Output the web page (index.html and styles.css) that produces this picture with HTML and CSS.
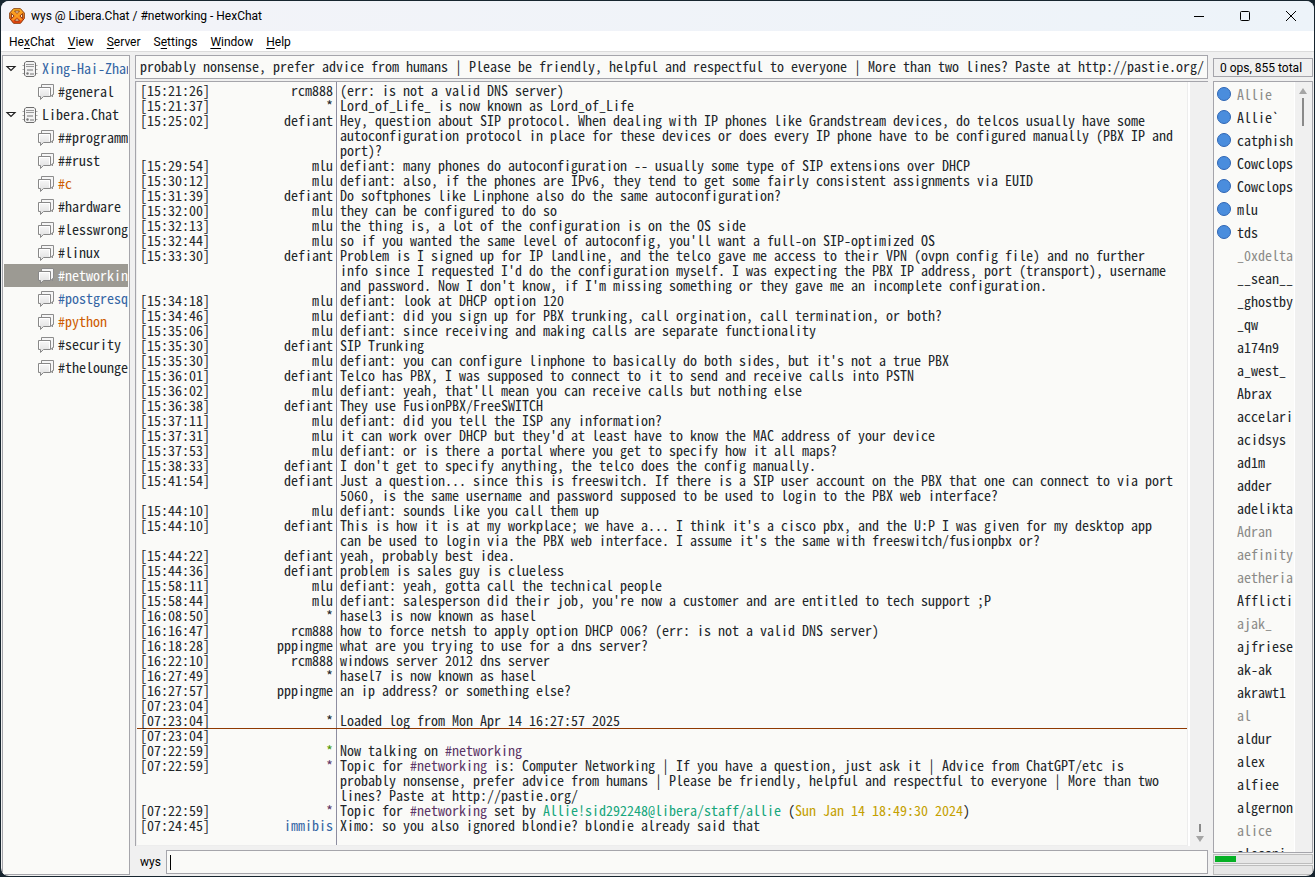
FILE: index.html
```html
<!DOCTYPE html>
<html lang="en">
<head>
    <meta charset="UTF-8">
    <meta name="viewport" content="width=device-width, initial-scale=1.0">
    <title>wys @ Libera.Chat / #networking - HexChat</title>
    <link rel="stylesheet" href="styles.css">
</head>
<body>
    <svg class="defs" aria-hidden="true">
        <linearGradient id="hex" x1="0" y1="0" x2="0" y2="1">
            <stop offset="0" stop-color="#ffc02a"/>
            <stop offset="1" stop-color="#f03c10"/>
        </linearGradient>
        <linearGradient id="paper" x1="0" y1="0" x2="0" y2="1">
            <stop offset="0" stop-color="#f8f8f8"/>
            <stop offset="1" stop-color="#dedede"/>
        </linearGradient>
        <symbol id="server" viewBox="0 0 16 16">
            <path d="M.5 4.500h15M.5 8.500h15M.5 12.500h15" stroke="#a8a8a8"/>
            <path d="M4 .5h8l1.500 1.500v12l-1.500 1.500h-8l-1.500-1.500v-12z" fill="#f2f2f2" stroke="#6d6d6d"/>
            <path d="M4 3.500h8M4 5.500h8" stroke="#999"/>
            <path d="M5 8h6v2h-6zM8 12h4v2h-4z" fill="#b4b4b4"/>
            <circle cx="5.500" cy="12.500" r="1.200" fill="#777"/>
        </symbol>
        <symbol id="channel" viewBox="0 0 16 16">
            <path d="M3.500 .5h12v10h-1v2.500l-2-2.500h-9z" fill="#f6f6f6" stroke="#8c8c8c"/>
            <path d="M.5 3.500h12v9h-7l-3 3v-3h-2z" fill="url(#paper)" stroke="#888"/>
            <path d="M1.500 11.500v-7h10v7" fill="none" stroke="#fff"/>
        </symbol>
        <symbol id="expander" viewBox="0 0 12 8">
            <path d="M2 1.500h8l-4 4z" fill="#fff" stroke="#222" stroke-width="1.200"/>
        </symbol>
    </svg>

    <div class="window">
        <header class="titlebar">
            <svg class="logo" viewBox="0 0 16 16">
                <path d="M4.500 .7h7l3.800 4.300v5.500l-3.800 4.800h-7l-3.800-4.800v-5.500z" fill="url(#hex)" stroke="#8a3a08"/>
                <path d="M5.500 3h5l-2.500 2.500zM5.500 13h5l-2.500-2.500zM2.500 5.500v5l2.500-2.500zM13.500 5.500v5l-2.500-2.500z" fill="#ffe9c4" stroke="#7a2c08" stroke-width=".8"/>
                <path d="M3.500 4l9 8M12.500 4l-9 8" stroke="#f8a020" stroke-width="1.500"/>
            </svg>
            <h1>wys @ Libera.Chat / #networking - HexChat</h1>
            <div class="controls">
                <button type="button" aria-label="Minimize"><svg viewBox="0 0 12 12"><path d="M1 6.500h10"/></svg></button>
                <button type="button" aria-label="Maximize"><svg viewBox="0 0 12 12"><rect x="1.500" y="1.500" width="9" height="9" rx="1"/></svg></button>
                <button type="button" aria-label="Close"><svg viewBox="0 0 12 12"><path d="M1 1l10 10M11 1l-10 10"/></svg></button>
            </div>
        </header>

        <nav class="menubar">
            <button type="button">He<u>x</u>Chat</button>
            <button type="button"><u>V</u>iew</button>
            <button type="button"><u>S</u>erver</button>
            <button type="button">S<u>e</u>ttings</button>
            <button type="button"><u>W</u>indow</button>
            <button type="button"><u>H</u>elp</button>
        </nav>

        <div class="workspace">
            <aside class="tree">
                <ul>
                    <li class="network message"><svg class="arrow"><use href="#expander"/></svg><svg class="icon"><use href="#server"/></svg><span>Xing-Hai-Zhan</span></li>
                    <li><svg class="icon"><use href="#channel"/></svg><span>#general</span></li>
                    <li class="network"><svg class="arrow"><use href="#expander"/></svg><svg class="icon"><use href="#server"/></svg><span>Libera.Chat</span></li>
                    <li><svg class="icon"><use href="#channel"/></svg><span>##programm</span></li>
                    <li><svg class="icon"><use href="#channel"/></svg><span>##rust</span></li>
                    <li class="event"><svg class="icon"><use href="#channel"/></svg><span>#c</span></li>
                    <li><svg class="icon"><use href="#channel"/></svg><span>#hardware</span></li>
                    <li><svg class="icon"><use href="#channel"/></svg><span>#lesswrong</span></li>
                    <li><svg class="icon"><use href="#channel"/></svg><span>#linux</span></li>
                    <li class="selected"><svg class="icon"><use href="#channel"/></svg><span>#networkin</span></li>
                    <li class="message"><svg class="icon"><use href="#channel"/></svg><span>#postgresq</span></li>
                    <li class="event"><svg class="icon"><use href="#channel"/></svg><span>#python</span></li>
                    <li><svg class="icon"><use href="#channel"/></svg><span>#security</span></li>
                    <li><svg class="icon"><use href="#channel"/></svg><span>#thelounge</span></li>
                </ul>
            </aside>

            <main class="chat">
                <input class="topic" type="text" aria-label="Topic" value="probably nonsense, prefer advice from humans | Please be friendly, helpful and respectful to everyone | More than two lines? Paste at http://pastie.org/">

                <div class="log-area">
                    <ol class="log">
                        <li><time>[15:21:26]</time><b>rcm888</b><p>(err: is not a valid DNS server)</p></li>
                        <li><time>[15:21:37]</time><b>*</b><p>Lord_of_Life_ is now known as Lord_of_Life</p></li>
                        <li><time>[15:25:02]</time><b>defiant</b><p>Hey, question about SIP protocol. When dealing with IP phones like Grandstream devices, do telcos usually have some autoconfiguration protocol in place for these devices or does every IP phone have to be configured manually (PBX IP and port)?</p></li>
                        <li><time>[15:29:54]</time><b>mlu</b><p>defiant: many phones do autoconfiguration -- usually some type of SIP extensions over DHCP</p></li>
                        <li><time>[15:30:12]</time><b>mlu</b><p>defiant: also, if the phones are IPv6, they tend to get some fairly consistent assignments via EUID</p></li>
                        <li><time>[15:31:39]</time><b>defiant</b><p>Do softphones like Linphone also do the same autoconfiguration?</p></li>
                        <li><time>[15:32:00]</time><b>mlu</b><p>they can be configured to do so</p></li>
                        <li><time>[15:32:13]</time><b>mlu</b><p>the thing is, a lot of the configuration is on the OS side</p></li>
                        <li><time>[15:32:44]</time><b>mlu</b><p>so if you wanted the same level of autoconfig, you'll want a full-on SIP-optimized OS</p></li>
                        <li><time>[15:33:30]</time><b>defiant</b><p>Problem is I signed up for IP landline, and the telco gave me access to their VPN (ovpn config file) and no further info since I requested I'd do the configuration myself. I was expecting the PBX IP address, port (transport), username and password. Now I don't know, if I'm missing something or they gave me an incomplete configuration.</p></li>
                        <li><time>[15:34:18]</time><b>mlu</b><p>defiant: look at DHCP option 120</p></li>
                        <li><time>[15:34:46]</time><b>mlu</b><p>defiant: did you sign up for PBX trunking, call orgination, call termination, or both?</p></li>
                        <li><time>[15:35:06]</time><b>mlu</b><p>defiant: since receiving and making calls are separate functionality</p></li>
                        <li><time>[15:35:30]</time><b>defiant</b><p>SIP Trunking</p></li>
                        <li><time>[15:35:30]</time><b>mlu</b><p>defiant: you can configure linphone to basically do both sides, but it's not a true PBX</p></li>
                        <li><time>[15:36:01]</time><b>defiant</b><p>Telco has PBX, I was supposed to connect to it to send and receive calls into PSTN</p></li>
                        <li><time>[15:36:02]</time><b>mlu</b><p>defiant: yeah, that'll mean you can receive calls but nothing else</p></li>
                        <li><time>[15:36:38]</time><b>defiant</b><p>They use FusionPBX/FreeSWITCH</p></li>
                        <li><time>[15:37:11]</time><b>mlu</b><p>defiant: did you tell the ISP any information?</p></li>
                        <li><time>[15:37:31]</time><b>mlu</b><p>it can work over DHCP but they'd at least have to know the MAC address of your device</p></li>
                        <li><time>[15:37:53]</time><b>mlu</b><p>defiant: or is there a portal where you get to specify how it all maps?</p></li>
                        <li><time>[15:38:33]</time><b>defiant</b><p>I don't get to specify anything, the telco does the config manually.</p></li>
                        <li><time>[15:41:54]</time><b>defiant</b><p>Just a question... since this is freeswitch. If there is a SIP user account on the PBX that one can connect to via port 5060, is the same username and password supposed to be used to login to the PBX web interface?</p></li>
                        <li><time>[15:44:10]</time><b>mlu</b><p>defiant: sounds like you call them up</p></li>
                        <li><time>[15:44:10]</time><b>defiant</b><p>This is how it is at my workplace; we have a... I think it's a cisco pbx, and the U:P I was given for my desktop app can be used to login via the PBX web interface. I assume it's the same with freeswitch/fusionpbx or?</p></li>
                        <li><time>[15:44:22]</time><b>defiant</b><p>yeah, probably best idea.</p></li>
                        <li><time>[15:44:36]</time><b>defiant</b><p>problem is sales guy is clueless</p></li>
                        <li><time>[15:58:11]</time><b>mlu</b><p>defiant: yeah, gotta call the technical people</p></li>
                        <li><time>[15:58:44]</time><b>mlu</b><p>defiant: salesperson did their job, you're now a customer and are entitled to tech support ;P</p></li>
                        <li><time>[16:08:50]</time><b>*</b><p>hasel3 is now known as hasel</p></li>
                        <li><time>[16:16:47]</time><b>rcm888</b><p>how to force netsh to apply option DHCP 006? (err: is not a valid DNS server)</p></li>
                        <li><time>[16:18:28]</time><b>pppingme</b><p>what are you trying to use for a dns server?</p></li>
                        <li><time>[16:22:10]</time><b>rcm888</b><p>windows server 2012 dns server</p></li>
                        <li><time>[16:27:49]</time><b>*</b><p>hasel7 is now known as hasel</p></li>
                        <li><time>[16:27:57]</time><b>pppingme</b><p>an ip address? or something else?</p></li>
                        <li><time>[07:23:04]</time></li>
                        <li class="marker"><time>[07:23:04]</time><b>*</b><p>Loaded log from Mon Apr 14 16:27:57 2025</p></li>
                        <li><time>[07:23:04]</time></li>
                        <li><time>[07:22:59]</time><b class="join">*</b><p>Now talking on <span class="room">#networking</span></p></li>
                        <li><time>[07:22:59]</time><b class="info">*</b><p>Topic for <span class="room">#networking</span> is: Computer Networking | If you have a question, just ask it | Advice from ChatGPT/etc is probably nonsense, prefer advice from humans | Please be friendly, helpful and respectful to everyone | More than two lines? Paste at http://pastie.org/</p></li>
                        <li><time>[07:22:59]</time><b class="info">*</b><p>Topic for <span class="room">#networking</span> set by <span class="host">Allie!sid292248@libera/staff/allie</span> (<span class="date">Sun Jan 14 18:49:30 2024</span>)</p></li>
                        <li><time>[07:24:45]</time><b class="nick">immibis</b><p>Ximo: so you also ignored blondie? blondie already said that</p></li>
                    </ol>
                    <div class="scrollbar at-end">
                        <i class="thumb"></i>
                        <i class="down"></i>
                    </div>
                </div>

                <form class="entry">
                    <label for="message">wys</label>
                    <input id="message" type="text" autocomplete="off">
                </form>
            </main>

            <aside class="users">
                <div class="count">0 ops, 855 total</div>
                <div class="user-area">
                    <ul>
                        <li class="voice away">Allie</li>
                        <li class="voice">Allie`</li>
                        <li class="voice">catphish</li>
                        <li class="voice">Cowclops</li>
                        <li class="voice">Cowclops</li>
                        <li class="voice">mlu</li>
                        <li class="voice">tds</li>
                        <li class="away">_0xdelta</li>
                        <li>__sean__</li>
                        <li>_ghostby</li>
                        <li>_qw</li>
                        <li>a174n9</li>
                        <li>a_west_</li>
                        <li>Abrax</li>
                        <li>accelari</li>
                        <li>acidsys</li>
                        <li>ad1m</li>
                        <li>adder</li>
                        <li>adelikta</li>
                        <li class="away">Adran</li>
                        <li class="away">aefinity</li>
                        <li class="away">aetheria</li>
                        <li>Afflicti</li>
                        <li class="away">ajak_</li>
                        <li>ajfriese</li>
                        <li>ak-ak</li>
                        <li>akrawt1</li>
                        <li class="away">al</li>
                        <li>aldur</li>
                        <li>alex</li>
                        <li>alfiee</li>
                        <li>algernon</li>
                        <li class="away">alice</li>
                        <li>alosani</li>
                    </ul>
                    <div class="scrollbar">
                        <i class="up"></i>
                        <i class="thumb"></i>
                    </div>
                </div>
                <div class="meter"><div style="width: 22%"></div></div>
                <div class="meter"></div>
            </aside>
        </div>
    </div>
</body>
</html>
```
FILE: styles.css
```css
*, *::before {
    box-sizing: border-box;
}
body {
    margin: 0;
    height: 100vh;
    padding: 1px;
    background: #17252f;
    color: #000;
    font: 12px/16px Roboto, "Noto Sans", sans-serif;
}
h1, ul, ol, p {
    margin: 0;
    padding: 0;
    font-weight: normal;
}
ul, ol {
    list-style: none;
}
button {
    padding: 0;
    border: 0;
    background: none;
    color: inherit;
    font: inherit;
}
.defs {
    position: absolute;
    width: 0;
    height: 0;
}
.window {
    display: flex;
    flex-direction: column;
    height: 100%;
    overflow: hidden;
    border-radius: 8px;
    background: #f0f0f0;
}

/* title bar */
.titlebar {
    display: flex;
    align-items: center;
    height: 30px;
    flex: none;
    padding-left: 8px;
    background: linear-gradient(to right, #f3f3f8, #edf3f9);
}
.logo {
    width: 16px;
    height: 16px;
    margin-right: 6px;
}
.titlebar h1 {
    flex: 1;
    font-size: 12px;
}
.controls {
    display: flex;
}
.controls button {
    display: flex;
    align-items: center;
    justify-content: center;
    width: 46px;
    height: 30px;
}
.controls svg {
    width: 12px;
    height: 12px;
    fill: none;
    stroke: #000;
}

/* menu */
.menubar {
    display: flex;
    gap: 13px;
    height: 21px;
    flex: none;
    padding: 2px 8px 0;
    border-bottom: 1px solid #dcdcdc;
    background: #fff;
}
.menubar u {
    text-underline-offset: 2px;
}

.workspace {
    display: flex;
    gap: 5px;
    flex: 1;
    min-height: 0;
    padding: 3px 1px 1px;
}
.tree, .log, .user-area, .topic, .entry input {
    font-family: "Noto Sans Mono CJK SC", "DejaVu Sans Mono", monospace;
    font-size: 14px;
    color: #212529;
}
.topic, .entry input, .tree, .user-area, .count {
    border: 1px solid #a5a5ab;
    background: #fafaf8;
}

/* network tree */
.tree {
    width: 128px;
    flex: none;
    padding: 1px;
    overflow: hidden;
}
.tree li {
    display: flex;
    align-items: center;
    gap: 4px;
    height: 23px;
    padding-left: 34px;
    overflow: hidden;
    white-space: nowrap;
}
.tree .network {
    padding-left: 1px;
}
.tree span {
    padding-bottom: 2px;
}
.icon {
    width: 16px;
    height: 16px;
    flex: none;
}
.arrow {
    width: 12px;
    height: 8px;
    flex: none;
    margin-right: 1px;
}
.tree .message {
    color: #3465a4;
}
.tree .event {
    color: #ce5c00;
}
.tree .selected {
    background: #9c9a93;
    color: #fff;
}

/* chat column */
.chat {
    display: flex;
    flex-direction: column;
    flex: 1;
    min-width: 0;
}
.topic {
    height: 24px;
    margin-bottom: 2px;
    padding: 0 3px 2px 4px;
    border-radius: 0;
}
.log-area {
    display: flex;
    flex: 1;
    min-height: 0;
    border-left: 1px solid #a5a5ab;
    border-top: 1px solid #a5a5ab;
}
.log {
    flex: 1;
    min-width: 0;
    padding: 1px 0;
    overflow: hidden;
    border: 1px solid #ededed;
    border-top: 0;
    background: linear-gradient(#8d8da0, #8d8da0) 199px 0 / 1px 100% no-repeat #fafaf8;
    line-height: 15px;
}
.log li {
    display: flex;
    padding-left: 3px;
}
.log time {
    width: 70px;
}
.log b {
    width: 123px;
    margin-right: 7px;
    font-weight: normal;
    text-align: right;
}
.log p {
    flex: 1;
    min-width: 0;
    padding-right: 10px;
}
.log .marker {
    margin-bottom: -1px;
    border-bottom: 1px solid #8f3902;
}
.join {
    color: #4e9a06;
}
.info, .room {
    color: #5c3566;
}
.host {
    color: #16a67c;
}
.date {
    color: #c4a000;
}
.nick {
    color: #3465a4;
}

/* scrollbars */
.scrollbar {
    display: flex;
    flex-direction: column;
    align-items: center;
    gap: 4px;
    width: 17px;
    flex: none;
    padding: 6px 2px 6px 0;
    background: #f0f0f0;
}
.at-end {
    justify-content: flex-end;
    width: 20px;
    padding: 4px 2px 4px 3px;
    border-left: 2px solid #fff;
}
.thumb {
    width: 2px;
    height: 28px;
    background: #8a8a8a;
}
.at-end .thumb {
    height: 8px;
}
.up, .down {
    border: 4px solid transparent;
}
.up {
    border-top: 0;
    border-bottom: 6px solid #a5a5a5;
}
.down {
    border-bottom: 0;
    border-top: 6px solid #a5a5a5;
}

/* input line */
.entry {
    display: flex;
    align-items: center;
    gap: 5px;
    margin: 4px 0 1px;
    padding-left: 5px;
}
.entry input {
    flex: 1;
    height: 24px;
    padding: 0 3px;
    border-radius: 0;
    outline: 0;
}
.entry input:not(:focus) {
    background: linear-gradient(#000, #000) 3px 50% / 1px 15px no-repeat #fafaf8;
}

/* user list */
.users {
    display: flex;
    flex-direction: column;
    width: 100px;
    flex: none;
}
.count {
    height: 19px;
    margin: 3px 0 4px;
    padding-left: 6px;
    background: #f0f0f0;
    line-height: 18px;
    white-space: nowrap;
}
.user-area {
    display: flex;
    flex: 1;
    min-height: 0;
    overflow: hidden;
}
.user-area ul {
    flex: 1;
    min-width: 0;
    overflow: hidden;
    border-right: 1px solid #fff;
}
.user-area li {
    display: flex;
    align-items: center;
    height: 23px;
    padding-left: 23px;
}
.user-area .voice {
    padding-left: 3px;
}
.voice::before {
    content: "";
    width: 14px;
    height: 14px;
    flex: none;
    margin-right: 6px;
    border: 1px solid #2f66b4;
    border-radius: 50%;
    background: #4a8ddd;
}
.away {
    color: #8b8b88;
}
.meter {
    height: 10px;
    margin-top: 1px;
    padding: 1px;
    border: 1px solid #bdbdbd;
    background: #e6e6e6;
}
.meter div {
    height: 100%;
    background: #06b025;
}
```
